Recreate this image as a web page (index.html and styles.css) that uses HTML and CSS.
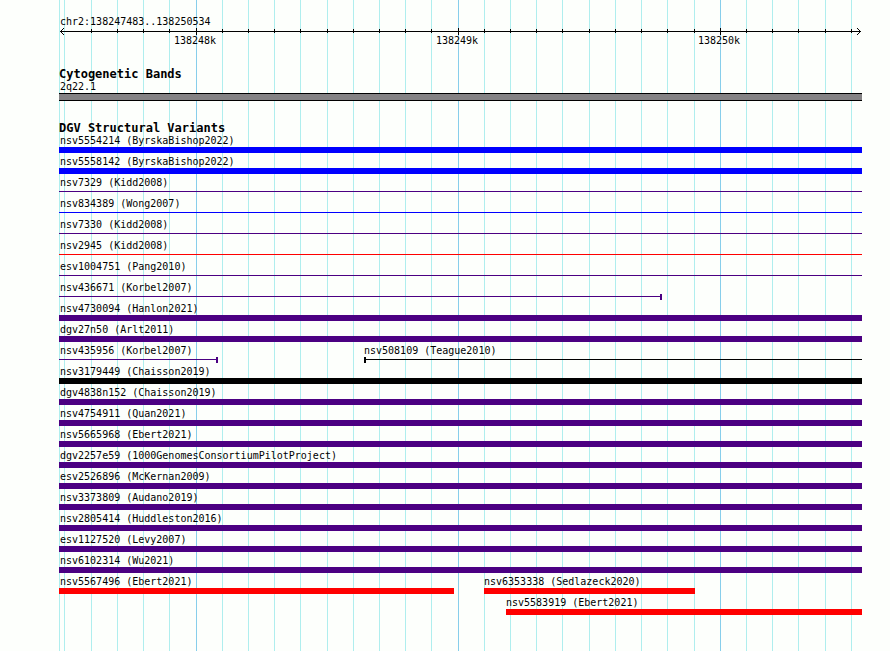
FILE: index.html
```html
<!DOCTYPE html>
<html lang="en">
<head>
<meta charset="utf-8">
<title>chr2:138247483..138250534</title>
<link rel="stylesheet" href="styles.css">
</head>
<body>
<main class="panel">
  <svg class="gridlines" viewBox="0 0 803 100" preserveAspectRatio="none" aria-hidden="true">
    <path class="minor" d="M0 0h1v100h-1zM5 0h1v100h-1zM32 0h1v100h-1zM58 0h1v100h-1zM84 0h1v100h-1zM110 0h1v100h-1zM163 0h1v100h-1zM189 0h1v100h-1zM215 0h1v100h-1zM241 0h1v100h-1zM268 0h1v100h-1zM294 0h1v100h-1zM320 0h1v100h-1zM346 0h1v100h-1zM372 0h1v100h-1zM425 0h1v100h-1zM451 0h1v100h-1zM477 0h1v100h-1zM503 0h1v100h-1zM530 0h1v100h-1zM556 0h1v100h-1zM582 0h1v100h-1zM608 0h1v100h-1zM635 0h1v100h-1zM687 0h1v100h-1zM713 0h1v100h-1zM739 0h1v100h-1zM766 0h1v100h-1zM792 0h1v100h-1z"/>
    <path class="major" d="M137 0h1v100h-1zM399 0h1v100h-1zM661 0h1v100h-1z"/>
  </svg>

  <header class="ruler">
    <div class="label">chr2:138247483..138250534</div>
    <svg class="axis" viewBox="0 0 803 7" preserveAspectRatio="none" aria-hidden="true">
      <path d="M1 3h801v1h-801z"/>
      <path d="M2 2h1v3h-1zM3 1h1v1h-1zM3 5h1v1h-1zM4 0h1v1h-1zM4 6h1v1h-1z"/>
      <path d="M800 2h1v3h-1zM799 1h1v1h-1zM799 5h1v1h-1zM798 0h1v1h-1zM798 6h1v1h-1z"/>
      <path d="M32 1h1v4h-1zM58 1h1v4h-1zM84 1h1v4h-1zM110 1h1v4h-1zM163 1h1v4h-1zM189 1h1v4h-1zM215 1h1v4h-1zM241 1h1v4h-1zM268 1h1v4h-1zM294 1h1v4h-1zM320 1h1v4h-1zM346 1h1v4h-1zM372 1h1v4h-1zM425 1h1v4h-1zM451 1h1v4h-1zM477 1h1v4h-1zM503 1h1v4h-1zM530 1h1v4h-1zM556 1h1v4h-1zM582 1h1v4h-1zM608 1h1v4h-1zM635 1h1v4h-1zM687 1h1v4h-1zM713 1h1v4h-1zM739 1h1v4h-1zM766 1h1v4h-1zM792 1h1v4h-1z"/>
      <path d="M137 0h1v7h-1zM399 0h1v7h-1zM661 0h1v7h-1z"/>
    </svg>
    <div class="ticks">
      <span style="--from:115">138248k</span>
      <span style="--from:377">138249k</span>
      <span style="--from:639">138250k</span>
    </div>
  </header>

  <section class="track">
    <h2>Cytogenetic Bands</h2>
    <div class="label">2q22.1</div>
    <div class="band"></div>
  </section>

  <section class="track">
    <h2>DGV Structural Variants</h2>
    <div class="row"><div class="feature gain"><div class="label">nsv5554214 (ByrskaBishop2022)</div><div class="bar"></div></div></div>
    <div class="row"><div class="feature gain"><div class="label">nsv5558142 (ByrskaBishop2022)</div><div class="bar"></div></div></div>
    <div class="row"><div class="feature"><div class="label">nsv7329 (Kidd2008)</div><div class="bar thin"></div></div></div>
    <div class="row"><div class="feature gain"><div class="label">nsv834389 (Wong2007)</div><div class="bar thin"></div></div></div>
    <div class="row"><div class="feature"><div class="label">nsv7330 (Kidd2008)</div><div class="bar thin"></div></div></div>
    <div class="row"><div class="feature loss"><div class="label">nsv2945 (Kidd2008)</div><div class="bar thin"></div></div></div>
    <div class="row"><div class="feature"><div class="label">esv1004751 (Pang2010)</div><div class="bar thin"></div></div></div>
    <div class="row"><div class="feature" style="--to:603"><div class="label">nsv436671 (Korbel2007)</div><div class="bar thin cap-end"></div></div></div>
    <div class="row"><div class="feature"><div class="label">nsv4730094 (Hanlon2021)</div><div class="bar"></div></div></div>
    <div class="row"><div class="feature"><div class="label">dgv27n50 (Arlt2011)</div><div class="bar"></div></div></div>
    <div class="row">
      <div class="feature" style="--to:159"><div class="label">nsv435956 (Korbel2007)</div><div class="bar thin cap-end"></div></div>
      <div class="feature inside other" style="--from:305"><div class="label">nsv508109 (Teague2010)</div><div class="bar thin cap-start"></div></div>
    </div>
    <div class="row"><div class="feature other"><div class="label">nsv3179449 (Chaisson2019)</div><div class="bar"></div></div></div>
    <div class="row"><div class="feature"><div class="label">dgv4838n152 (Chaisson2019)</div><div class="bar"></div></div></div>
    <div class="row"><div class="feature"><div class="label">nsv4754911 (Quan2021)</div><div class="bar"></div></div></div>
    <div class="row"><div class="feature"><div class="label">nsv5665968 (Ebert2021)</div><div class="bar"></div></div></div>
    <div class="row"><div class="feature"><div class="label">dgv2257e59 (1000GenomesConsortiumPilotProject)</div><div class="bar"></div></div></div>
    <div class="row"><div class="feature"><div class="label">esv2526896 (McKernan2009)</div><div class="bar"></div></div></div>
    <div class="row"><div class="feature"><div class="label">nsv3373809 (Audano2019)</div><div class="bar"></div></div></div>
    <div class="row"><div class="feature"><div class="label">nsv2805414 (Huddleston2016)</div><div class="bar"></div></div></div>
    <div class="row"><div class="feature"><div class="label">esv1127520 (Levy2007)</div><div class="bar"></div></div></div>
    <div class="row"><div class="feature"><div class="label">nsv6102314 (Wu2021)</div><div class="bar"></div></div></div>
    <div class="row">
      <div class="feature loss" style="--to:395"><div class="label">nsv5567496 (Ebert2021)</div><div class="bar"></div></div>
      <div class="feature inside loss" style="--from:425;--to:636"><div class="label">nsv6353338 (Sedlazeck2020)</div><div class="bar"></div></div>
    </div>
    <div class="row"><div class="feature inside loss" style="--from:447"><div class="label">nsv5583919 (Ebert2021)</div><div class="bar"></div></div></div>
  </section>
</main>
</body>
</html>
```

FILE: styles.css
```css
* {
  box-sizing: border-box;
}

body {
  margin: 0;
  background: #fdfffc;
  color: #000;
  font: 10px/13px "DejaVu Sans Mono", "Liberation Mono", monospace;
}

.panel {
  position: relative;
  min-height: 100vh;
  margin: 0 28px 0 59px;
  padding-top: 15px;
}

/* Vertical guides run behind every track */
.gridlines {
  position: absolute;
  inset: 0;
  z-index: -1;
  width: 100%;
  height: 100%;
  shape-rendering: crispEdges;
}

.minor {
  fill: #afeeee;
}

.major {
  fill: #87ceeb;
}

.label {
  padding-left: 1px;
  white-space: nowrap;
}

.axis {
  display: block;
  width: 100%;
  height: 7px;
  shape-rendering: crispEdges;
}

.ticks,
.row {
  display: grid;
}

.ticks {
  line-height: 11px;
}

.ticks span,
.feature {
  --from: 0;
  --to: 803;
  grid-area: 1 / 1;
  margin-left: calc(var(--from) / 803 * 100%);
}

.track {
  padding-top: 22px;
}

.track + .track {
  padding-top: 21px;
}

h2 {
  margin: 0;
  font-size: 12px;
  line-height: 12px;
}

.band {
  height: 8px;
  border: solid #000;
  border-width: 1px 0;
  background: #848284;
}

.row {
  padding-bottom: 2px;
}

.feature {
  width: calc((var(--to) - var(--from)) / 803 * 100%);
  color: #4b0082;
}

.feature .label {
  color: #000;
}

.inside .label {
  padding-left: 0;
}

.gain {
  color: #00f;
}

.loss {
  color: #f00;
}

.other {
  color: #000;
}

.bar {
  height: 6px;
  background: currentColor;
}

.thin {
  background: linear-gradient(currentColor, currentColor) 0 2px / 100% 1px no-repeat;
}

.cap-end {
  border-right: 2px solid;
}

.cap-start {
  border-left: 2px solid;
}
```
